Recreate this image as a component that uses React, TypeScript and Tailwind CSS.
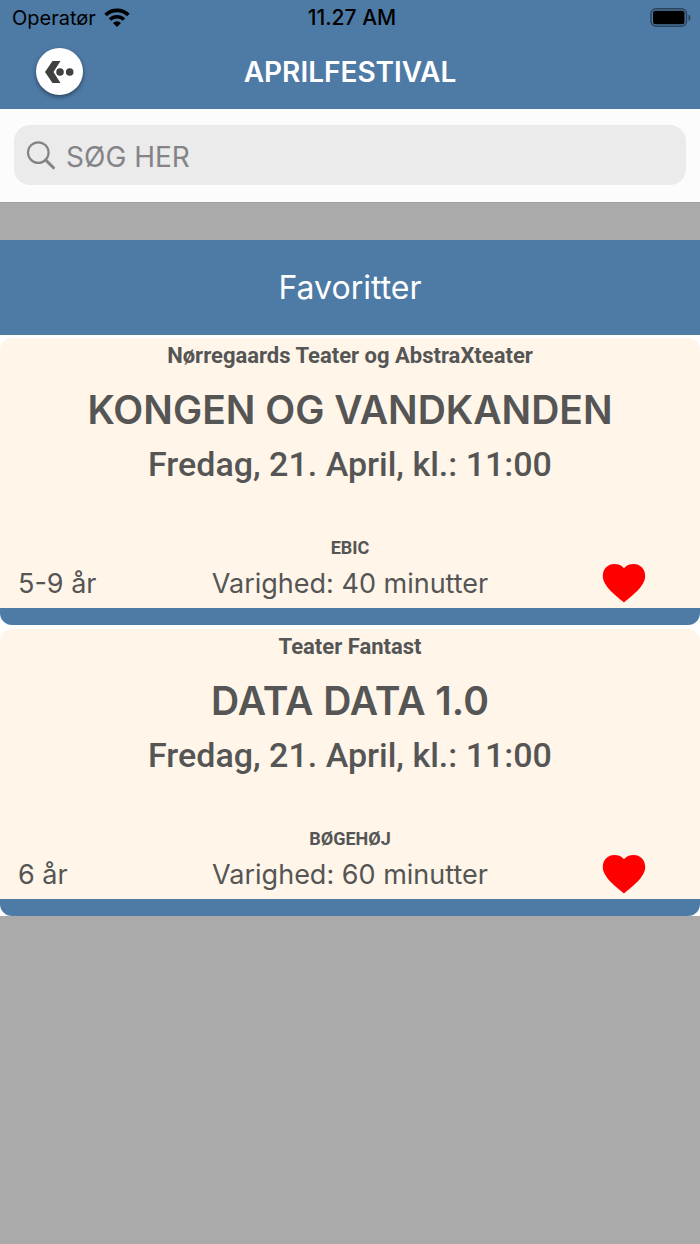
import { useState } from "react"

type Show = {
  id: number
  theater: string
  title: string
  date: string
  venue: string
  age: string
  duration: number
}

const shows: Show[] = [
  {
    id: 1,
    theater: "Nørregaards Teater og AbstraXteater",
    title: "KONGEN OG VANDKANDEN",
    date: "Fredag, 21. April, kl.: 11:00",
    venue: "EBIC",
    age: "5-9 år",
    duration: 40,
  },
  {
    id: 2,
    theater: "Teater Fantast",
    title: "DATA DATA 1.0",
    date: "Fredag, 21. April, kl.: 11:00",
    venue: "BØGEHØJ",
    age: "6 år",
    duration: 60,
  },
]

function WifiIcon() {
  return (
    <svg viewBox="0 0 26 20" className="w-[26px] h-5" fill="none" stroke="black" aria-hidden="true">
      <path d="M1.600 7a16.200 16.200 0 0 1 22.800 0" strokeWidth="3.800" />
      <path d="M6 11.600a9.900 9.900 0 0 1 14 0" strokeWidth="3.600" />
      <path d="M13 19l-4-4.100a5.700 5.700 0 0 1 8 0z" fill="black" stroke="none" />
    </svg>
  )
}

function BatteryIcon() {
  return (
    <svg viewBox="0 0 42 20" className="w-[42px] h-5" aria-hidden="true">
      <rect x="1" y="0.8" width="35.5" height="17.5" rx="5" fill="none" stroke="#2b4459" strokeWidth="1.5" />
      <rect x="3" y="2.8" width="31.5" height="13.5" rx="2.5" fill="black" />
      <path d="M38.5 6.5c2.6 1 2.6 5.5 0 6.5z" fill="#2b4459" />
    </svg>
  )
}

function StatusBar() {
  return (
    <div className="grid grid-cols-[1fr_auto_1fr] items-center h-9 pl-3 pr-2 text-xl text-black">
      <div className="flex items-center gap-2">
        <span>Operatør</span>
        <WifiIcon />
      </div>
      <span className="text-center text-[21px] font-medium">11.27 AM</span>
      <div className="flex justify-end">
        <BatteryIcon />
      </div>
    </div>
  )
}

function NavBar() {
  return (
    <div className="grid grid-cols-[1fr_auto_1fr] items-center h-[73px] px-9 pb-0.5">
      <button
        type="button"
        aria-label="Tilbage"
        className="flex items-center justify-center w-[47px] h-[47px] rounded-full bg-white shadow-[0_2px_4px_rgba(0,0,0,0.45)]"
      >
        <svg viewBox="0 0 30 22" className="w-[30px] h-[22px]" fill="#404040" aria-hidden="true">
          <path d="M7.5 0H15.5L8.500 11L15.500 22H7.500L0 11z" />
          <circle cx="15" cy="11" r="4.6" fill="white" />
          <circle cx="15" cy="11" r="3.8" />
          <circle cx="24.700" cy="11" r="3.8" />
        </svg>
      </button>
      <h1 className="text-[28px] leading-9 font-semibold text-white">APRILFESTIVAL</h1>
    </div>
  )
}

function SearchBar() {
  return (
    <div className="bg-[#fcfcfc] px-3.5 pt-4 pb-[17px] border-b border-[#a0a0a0]">
      <label className="flex items-center gap-2.5 h-[60px] px-3 rounded-2xl bg-[#ebebeb]">
        <svg viewBox="0 0 30 30" className="w-[30px] h-[30px] shrink-0" fill="none" stroke="#848488" aria-hidden="true">
          <circle cx="12.3" cy="12.6" r="10.3" strokeWidth="2.2" />
          <path d="M19.8 20.1L27.5 27.8" strokeWidth="3" strokeLinecap="round" />
        </svg>
        <input
          type="search"
          aria-label="Søg her"
          placeholder="SØG HER"
          className="flex-1 min-w-0 pt-[3px] bg-transparent text-[28px] leading-9 text-[#555] placeholder:text-[#848488] outline-none"
        />
      </label>
    </div>
  )
}

function ShowCard({ show }: { show: Show }) {
  const [favorite, setFavorite] = useState(true)

  return (
    <li className="rounded-xl overflow-hidden bg-[#fff5e9] text-[#555] text-center border-b-[17px] border-[#4e7aa6]">
      <p className="font-['Roboto',sans-serif] text-[22px] leading-9 font-bold">{show.theater}</p>
      <h3 className="pt-2 text-[39px] leading-14 font-semibold">{show.title}</h3>
      <p className="font-['Roboto',sans-serif] text-[34px] leading-[52px] font-medium">{show.date}</p>
      <p className="pt-[46px] font-['Roboto',sans-serif] text-lg leading-6 font-bold">{show.venue}</p>
      <div className="grid grid-cols-[1fr_auto_1fr] items-center h-12 text-[27px] leading-9">
        <span className="pl-[18px] text-left">{show.age}</span>
        <span>Varighed: {show.duration} minutter</span>
        <button
          type="button"
          aria-label="Favorit"
          aria-pressed={favorite}
          onClick={() => setFavorite(!favorite)}
          className="justify-self-end mr-[54px] pb-0.5"
        >
          <svg viewBox="0 0 44 40" className="w-11 h-10" fill={favorite ? "#ff0000" : "#cccccc"} aria-hidden="true">
            <path d="M22 39.5C15 33.5 0.8 23.5 0.8 13C0.8 5.8 6 1 12.2 1C16.500 1 20 2.500 22 5.300C24 2.500 27.500 1 31.800 1C38 1 43.200 5.800 43.200 13C43.200 23.500 29 33.500 22 39.500z" />
          </svg>
        </button>
      </div>
    </li>
  )
}

export default function App() {
  return (
    <div className="min-h-screen bg-[#aaaaaa] font-['Inter',sans-serif]">
      <header className="bg-[#4e7aa6]">
        <StatusBar />
        <NavBar />
      </header>
      <SearchBar />

      <main className="pt-[37px]">
        <h2 className="bg-[#4e7aa6] text-center text-[32px] leading-[95px] text-white">Favoritter</h2>
        <ul className="flex flex-col gap-1 pt-[3px] bg-white">
          {shows.map((show) => (
            <ShowCard key={show.id} show={show} />
          ))}
        </ul>
      </main>
    </div>
  )
}
